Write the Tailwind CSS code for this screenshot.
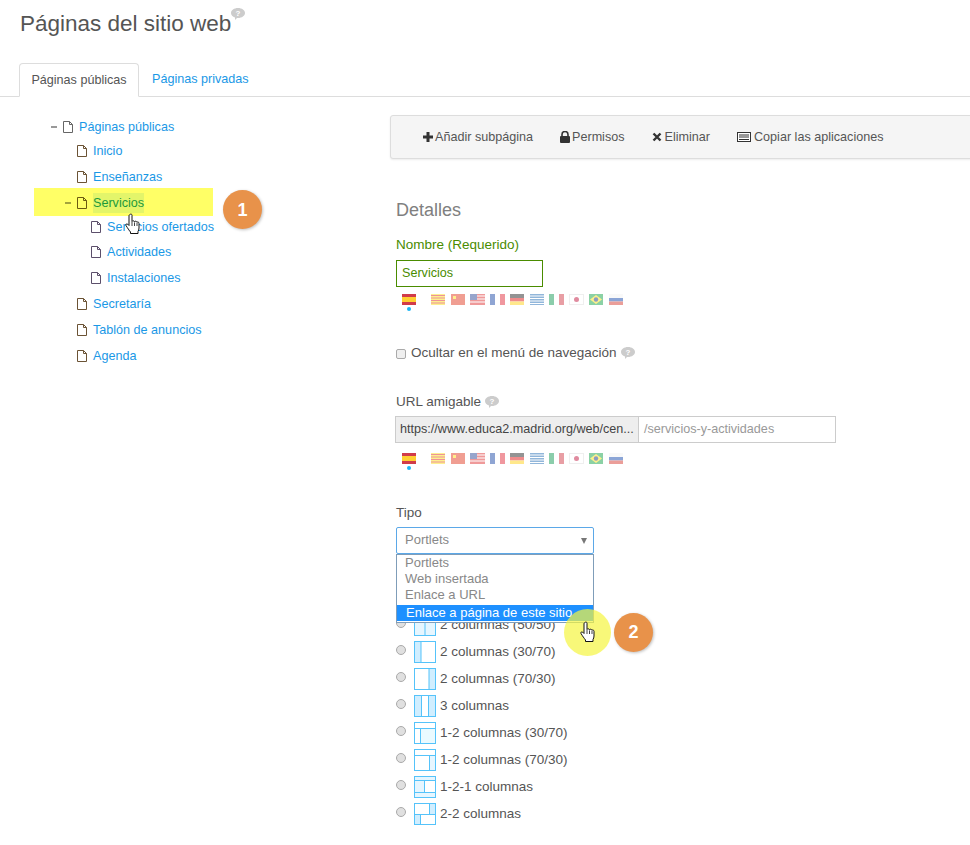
<!DOCTYPE html>
<html lang="es">
<head>
    <meta charset="UTF-8">
    <title>Páginas del sitio web</title>
    <script src="https://cdn.jsdelivr.net/npm/@tailwindcss/browser@4"></script>
</head>
<body class="bg-white w-[970px] h-[845px] overflow-hidden font-['Liberation_Sans',Arial,sans-serif] text-[12.6px] text-[#555]">
    <!-- shared icons -->
    <svg class="hidden">
        <symbol id="doc" viewBox="0 0 11 12"><path d="M.5 .5h6l3 3v8H.5z M6.500 .5v3h3" fill="none" stroke="currentColor"/></symbol>
        <symbol id="bubble" viewBox="0 0 14 12"><path d="M7 0c3.900 0 7 2.200 7 5s-3.100 5-7 5l-1 0-2 2v-2.600C1.600 8.600 0 7 0 5c0-2.800 3.100-5 7-5z" fill="#ccc"/><text x="7" y="8" font-size="8" font-weight="bold" text-anchor="middle" fill="#fff">?</text></symbol>
        <symbol id="hand" viewBox="0 0 16 22"><path d="M5 1.500c.8-.8 2-.4 2 .8v6.200c.3-1 2.300-1 2.500.3.400-.9 2.200-.8 2.400.5.600-.7 2.100-.3 2.100 1v4.700c0 1.500-.5 2.500-1 3.500v2H5.500v-1.500C4 17 2.800 15.500 1 12.500c-.6-1 .6-2.200 1.700-1.300l1.300 1.300V2.500c0-.4.500-.8 1-1z" fill="#fff" stroke="#111" stroke-width="1"/><path d="M7 9v4M9.500 9.500V13M12 10v3" stroke="#111" stroke-width=".8"/></symbol>
        <symbol id="flags" viewBox="0 0 222 11">
            <g opacity=".8"><rect x="0" width="14" height="11" fill="#c60b1e"/><rect x="0" y="3" width="14" height="5" fill="#ffc400"/></g>
            <g opacity=".45">
                <rect x="29" width="14" height="11" fill="#fcdd09"/><path d="M29 1.500h14M29 4h14M29 6.500h14M29 9h14" stroke="#da121a" stroke-width="1.200"/>
                <rect x="49" width="14" height="11" fill="#de2910"/><rect x="51" y="2" width="3" height="3" fill="#ffde00"/>
                <rect x="68" width="15" height="11" fill="#d22"/><path d="M68 2h15M68 5h15M68 8h15" stroke="#fff" stroke-width="1.200"/><rect x="68" width="7" height="6" fill="#1a3a8f"/>
                <rect x="88" width="5" height="11" fill="#0a3a9f"/><rect x="93" width="5" height="11" fill="#fff"/><rect x="98" width="5" height="11" fill="#e01a2b"/>
                <rect x="108" width="14" height="4" fill="#111"/><rect x="108" y="4" width="14" height="3.500" fill="#d00"/><rect x="108" y="7.500" width="14" height="3.500" fill="#ffce00"/>
                <rect x="128" width="14" height="11" fill="#0d5eaf"/><path d="M128 2h14M128 4.500h14M128 7h14M128 9.500h14" stroke="#fff"/>
                <rect x="147" width="5" height="11" fill="#009246"/><rect x="152" width="5" height="11" fill="#fff"/><rect x="157" width="5" height="11" fill="#ce2b37"/>
                <rect x="167.500" y=".5" width="14" height="10" fill="#fff" stroke="#ddd"/><circle cx="174.500" cy="5.500" r="2.500" fill="#bc002d"/>
                <rect x="187" width="14" height="11" fill="#009b3a"/><path d="M194 1l6 4.500-6 4.500-6-4.500z" fill="#fedf00"/><circle cx="194" cy="5.500" r="2.200" fill="#002776"/>
                <rect x="207" width="14" height="4" fill="#f2f2f2"/><rect x="207" y="4" width="14" height="3.500" fill="#0039a6"/><rect x="207" y="7.500" width="14" height="3.500" fill="#d52b1e"/>
            </g>
        </symbol>
    </svg>

    <!-- header -->
    <h1 class="h-[63px] pl-[20px] pt-[9px] text-[#555] text-[22.5px] leading-[30px] font-normal flex items-start">
        Páginas del sitio web
        <svg class="w-[14px] h-[12px] -mt-[1px]"><use href="#bubble"/></svg>
    </h1>

    <!-- tabs -->
    <div class="h-[34px] border-b border-[#ddd] pl-[19px] flex">
        <div class="w-[120px] h-[34px] bg-white border border-[#ddd] border-b-white rounded-t-[4px] flex items-center justify-center">Páginas públicas</div>
        <div class="ml-[13px] h-[33px] flex items-center text-[#1a98e6]">Páginas privadas</div>
    </div>

    <div class="flex">
        <!-- tree -->
        <div class="w-[390px] shrink-0 pt-[20px] text-[#1a98e6] leading-[20px]">
            <div class="h-[20px] pl-[51px] flex items-center">
                <span class="w-[6px] h-[2px] bg-[#999] mr-[6px]"></span>
                <svg class="w-[11px] h-[12px] text-[#666] mr-[5px]"><use href="#doc"/></svg>
                Páginas públicas
            </div>
            <div class="h-[20px] mt-[4px] pl-[77px] flex items-center">
                <svg class="w-[11px] h-[12px] text-[#6b5335] mr-[5px]"><use href="#doc"/></svg>
                Inicio
            </div>
            <div class="h-[20px] mt-[6px] pl-[77px] flex items-center">
                <svg class="w-[11px] h-[12px] text-[#6b5335] mr-[5px]"><use href="#doc"/></svg>
                Enseñanzas
            </div>
            <div class="relative h-[20px] mt-[6px] pl-[65px] flex items-center text-[#1d9a3a]">
                <div class="absolute left-[34px] top-[-5px] w-[179px] h-[28px] bg-[#ffff66]"></div>
                <span class="relative w-[6px] h-[2px] bg-[#a3a33d] mr-[6px]"></span>
                <svg class="relative w-[11px] h-[12px] text-[#6b5a10] mr-[5px]"><use href="#doc"/></svg>
                <span class="relative bg-[#e3f56a]">Servicios</span>
                <div class="absolute left-[223px] top-[-3px] w-[39px] h-[39px] rounded-full bg-[#e8924a] shadow-[1px_1px_3px_rgba(0,0,0,0.25)] text-white text-[18px] font-bold flex items-center justify-center">1</div>
                <svg class="absolute left-[125px] top-[20px] w-[16px] h-[22px] z-10"><use href="#hand"/></svg>
            </div>
            <div class="h-[20px] mt-[4px] pl-[91px] flex items-center">
                <svg class="w-[11px] h-[12px] text-[#5c4f6b] mr-[5px]"><use href="#doc"/></svg>
                Servicios ofertados
            </div>
            <div class="h-[20px] mt-[5px] pl-[91px] flex items-center">
                <svg class="w-[11px] h-[12px] text-[#5c4f6b] mr-[5px]"><use href="#doc"/></svg>
                Actividades
            </div>
            <div class="h-[20px] mt-[6px] pl-[91px] flex items-center">
                <svg class="w-[11px] h-[12px] text-[#5c4f6b] mr-[5px]"><use href="#doc"/></svg>
                Instalaciones
            </div>
            <div class="h-[20px] mt-[6px] pl-[77px] flex items-center">
                <svg class="w-[11px] h-[12px] text-[#6b5335] mr-[5px]"><use href="#doc"/></svg>
                Secretaría
            </div>
            <div class="h-[20px] mt-[6px] pl-[77px] flex items-center">
                <svg class="w-[11px] h-[12px] text-[#6b5335] mr-[5px]"><use href="#doc"/></svg>
                Tablón de anuncios
            </div>
            <div class="h-[20px] mt-[6px] pl-[77px] flex items-center">
                <svg class="w-[11px] h-[12px] text-[#6b5335] mr-[5px]"><use href="#doc"/></svg>
                Agenda
            </div>
        </div>

        <!-- details column -->
        <div class="flex-1 pt-[18px]">
            <div class="h-[44px] -mr-[4px] pl-[32px] flex items-center border border-[#ddd] rounded-l-[3px] bg-[#f5f5f5] shadow-[0_1px_2px_rgba(0,0,0,0.08)]">
                <svg class="w-[10px] h-[10px] mr-[2px]" viewBox="0 0 10 10"><path d="M0 3.500h3.500V0h3v3.500H10v3H6.500V10h-3V6.500H0z" fill="#333"/></svg>
                <span>Añadir subpágina</span>
                <svg class="w-[10px] h-[12px] ml-[27px] mr-[2px]" viewBox="0 0 10 12"><path d="M2 5V3.500a3 3 0 0 1 6 0V5" fill="none" stroke="#333" stroke-width="1.600"/><rect y="5" width="10" height="7" rx="1" fill="#333"/></svg>
                <span>Permisos</span>
                <svg class="w-[10px] h-[10px] ml-[27px] mr-[3px]" viewBox="0 0 10 10"><path d="M1.500 1.500l7 7M8.500 1.500l-7 7" stroke="#333" stroke-width="2.400"/></svg>
                <span>Eliminar</span>
                <svg class="w-[14px] h-[10px] ml-[27px] mr-[3px]" viewBox="0 0 14 10"><rect x=".5" y=".5" width="13" height="9" fill="#fff" stroke="#333"/><path d="M2 3h10M2 5h10" stroke="#333"/><path d="M2 7.500h10" stroke="#333"/></svg>
                <span>Copiar las aplicaciones</span>
            </div>

            <div class="pl-[6px]">
                <h3 class="mt-[41px] text-[18px] leading-[20px] font-normal text-[#808080]">Detalles</h3>

                <label class="block mt-[16px] text-[13.5px] leading-[18px] text-[#4a8c00]">Nombre (Requerido)</label>
                <div class="mt-[6px] w-[147px] h-[27px] border border-[#4a8c00] text-[#4a8c00] pl-[5px] leading-[25px]">Servicios</div>
                <svg class="block mt-[7px] ml-[6px] w-[222px] h-[11px]"><use href="#flags"/></svg>
                <div class="mt-[2px] ml-[11px] w-[4px] h-[4px] rounded-full bg-[#1ab5f5]"></div>

                <div class="mt-[33px] h-[18px] flex items-center text-[13.5px]">
                    <span class="w-[10px] h-[10px] border border-[#aaa] rounded-[2px] bg-[#efefef] mr-[5px] mt-[2px]"></span>
                    Ocultar en el menú de navegación
                    <svg class="w-[14px] h-[12px] ml-[4px]"><use href="#bubble"/></svg>
                </div>

                <div class="mt-[31px] h-[18px] flex items-center text-[13.5px]">
                    URL amigable
                    <svg class="w-[14px] h-[12px] ml-[4px]"><use href="#bubble"/></svg>
                </div>
                <div class="mt-[5px] -ml-px w-[441px] h-[27px] flex border border-[#ccc]">
                    <div class="w-[243px] bg-[#eee] border-r border-[#ccc] pl-[4px] leading-[25px] text-[#444]">https://www.educa2.madrid.org/web/cen...</div>
                    <div class="pl-[5px] leading-[25px] text-[#999]">/servicios-y-actividades</div>
                </div>
                <svg class="block mt-[10px] ml-[6px] w-[222px] h-[11px]"><use href="#flags"/></svg>
                <div class="mt-[2px] ml-[11px] w-[4px] h-[4px] rounded-full bg-[#1ab5f5]"></div>

                <div class="mt-[34px] h-[18px] flex items-center text-[13.5px]">Tipo</div>

                <!-- select with its open list -->
                <div class="relative mt-[5px] w-[198px] h-[27px] border border-[#5ba8e8] rounded-[2px] text-[13px] text-[#888] pl-[8px] leading-[23px] z-10 bg-white">
                    Portlets
                    <span class="absolute right-[6px] top-[10px] w-0 h-0 border-x-[3px] border-x-transparent border-t-[6px] border-t-[#777]"></span>
                    <div class="absolute left-[-1px] top-[26px] w-[198px] h-[69px] border border-[#7f9db9] bg-white text-[#888] leading-[16px]">
                        <div class="pl-[8px]">Portlets</div>
                        <div class="pl-[8px]">Web insertada</div>
                        <div class="pl-[8px]">Enlace a URL</div>
                        <div class="pl-[9px] mt-[2px] h-[16px] bg-[#1e90ff] text-white">Enlace a página de este sitio</div>
                    </div>
                    <div class="absolute left-[167px] top-[81px] w-[47px] h-[47px] rounded-full bg-[#f5f540]/70"></div>
                    <svg class="absolute left-[183px] top-[93px] w-[16px] h-[22px]"><use href="#hand"/></svg>
                    <div class="absolute left-[217px] top-[85px] w-[39px] h-[39px] rounded-full bg-[#e8924a] shadow-[1px_1px_3px_rgba(0,0,0,0.25)] text-white text-[18px] font-bold flex items-center justify-center">2</div>
                </div>

                <!-- layouts -->
                <div class="mt-[60px] flex flex-col gap-[5px] text-[13.5px]" id="layouts">
                    <div class="h-[22px] flex items-center">
                        <span class="w-[10px] h-[10px] rounded-full border border-[#aaa] bg-[#e0e0e0] mb-[4px]"></span>
                        <svg class="ml-[8px] mr-[4px] w-[22px] h-[22px]" viewBox="0 0 22 22"><rect x=".5" y=".5" width="21" height="21" fill="#e6f6ff" stroke="#55c3fa"/><path d="M11 0v22" stroke="#55c3fa"/></svg>
                        2 columnas (50/50)
                    </div>
                    <div class="h-[22px] flex items-center">
                        <span class="w-[10px] h-[10px] rounded-full border border-[#aaa] bg-[#e0e0e0] mb-[4px]"></span>
                        <svg class="ml-[8px] mr-[4px] w-[22px] h-[22px]" viewBox="0 0 22 22"><rect x=".5" y=".5" width="21" height="21" fill="#fff" stroke="#55c3fa"/><rect x="1" y="1" width="6" height="20" fill="#d0eeff"/><path d="M7 0v22" stroke="#55c3fa"/></svg>
                        2 columnas (30/70)
                    </div>
                    <div class="h-[22px] flex items-center">
                        <span class="w-[10px] h-[10px] rounded-full border border-[#aaa] bg-[#e0e0e0] mb-[4px]"></span>
                        <svg class="ml-[8px] mr-[4px] w-[22px] h-[22px]" viewBox="0 0 22 22"><rect x=".5" y=".5" width="21" height="21" fill="#fff" stroke="#55c3fa"/><rect x="15" y="1" width="6" height="20" fill="#d0eeff"/><path d="M15 0v22" stroke="#55c3fa"/></svg>
                        2 columnas (70/30)
                    </div>
                    <div class="h-[22px] flex items-center">
                        <span class="w-[10px] h-[10px] rounded-full border border-[#aaa] bg-[#e0e0e0] mb-[4px]"></span>
                        <svg class="ml-[8px] mr-[4px] w-[22px] h-[22px]" viewBox="0 0 22 22"><rect x=".5" y=".5" width="21" height="21" fill="#d0eeff" stroke="#55c3fa"/><rect x="8" y="1" width="6" height="20" fill="#fff"/><path d="M7.500 0v22M14.500 0v22" stroke="#55c3fa"/></svg>
                        3 columnas
                    </div>
                    <div class="h-[22px] flex items-center">
                        <span class="w-[10px] h-[10px] rounded-full border border-[#aaa] bg-[#e0e0e0] mb-[4px]"></span>
                        <svg class="ml-[8px] mr-[4px] w-[22px] h-[22px]" viewBox="0 0 22 22"><rect x=".5" y=".5" width="21" height="21" fill="#eafaff" stroke="#55c3fa"/><rect x="1" y="1" width="20" height="5" fill="#fff"/><rect x="1" y="7" width="5" height="14" fill="#fff"/><path d="M0 6.500h22M6.500 6v16" stroke="#55c3fa"/></svg>
                        1-2 columnas (30/70)
                    </div>
                    <div class="h-[22px] flex items-center">
                        <span class="w-[10px] h-[10px] rounded-full border border-[#aaa] bg-[#e0e0e0] mb-[4px]"></span>
                        <svg class="ml-[8px] mr-[4px] w-[22px] h-[22px]" viewBox="0 0 22 22"><rect x=".5" y=".5" width="21" height="21" fill="#fff" stroke="#55c3fa"/><rect x="15" y="7" width="6" height="14" fill="#e6f6ff"/><path d="M0 6.500h22M15.500 6v16" stroke="#55c3fa"/></svg>
                        1-2 columnas (70/30)
                    </div>
                    <div class="h-[22px] flex items-center">
                        <span class="w-[10px] h-[10px] rounded-full border border-[#aaa] bg-[#e0e0e0] mb-[4px]"></span>
                        <svg class="ml-[8px] mr-[4px] w-[22px] h-[22px]" viewBox="0 0 22 22"><rect x=".5" y=".5" width="21" height="21" fill="#e6f6ff" stroke="#55c3fa"/><rect x="11" y="5" width="10" height="11" fill="#fff"/><path d="M0 4.500h22M0 16.500h22M10.500 4v12" stroke="#55c3fa"/></svg>
                        1-2-1 columnas
                    </div>
                    <div class="h-[22px] flex items-center">
                        <span class="w-[10px] h-[10px] rounded-full border border-[#aaa] bg-[#e0e0e0] mb-[4px]"></span>
                        <svg class="ml-[8px] mr-[4px] w-[22px] h-[22px]" viewBox="0 0 22 22"><rect x=".5" y=".5" width="21" height="21" fill="#fff" stroke="#55c3fa"/><rect x="1" y="12" width="6" height="9" fill="#d0eeff"/><rect x="15" y="1" width="6" height="10" fill="#d0eeff"/><path d="M0 11.500h22M15.500 0v12M6.500 11v11" stroke="#55c3fa"/></svg>
                        2-2 columnas
                    </div>
                </div>
            </div>
        </div>
    </div>
</body>
</html>
